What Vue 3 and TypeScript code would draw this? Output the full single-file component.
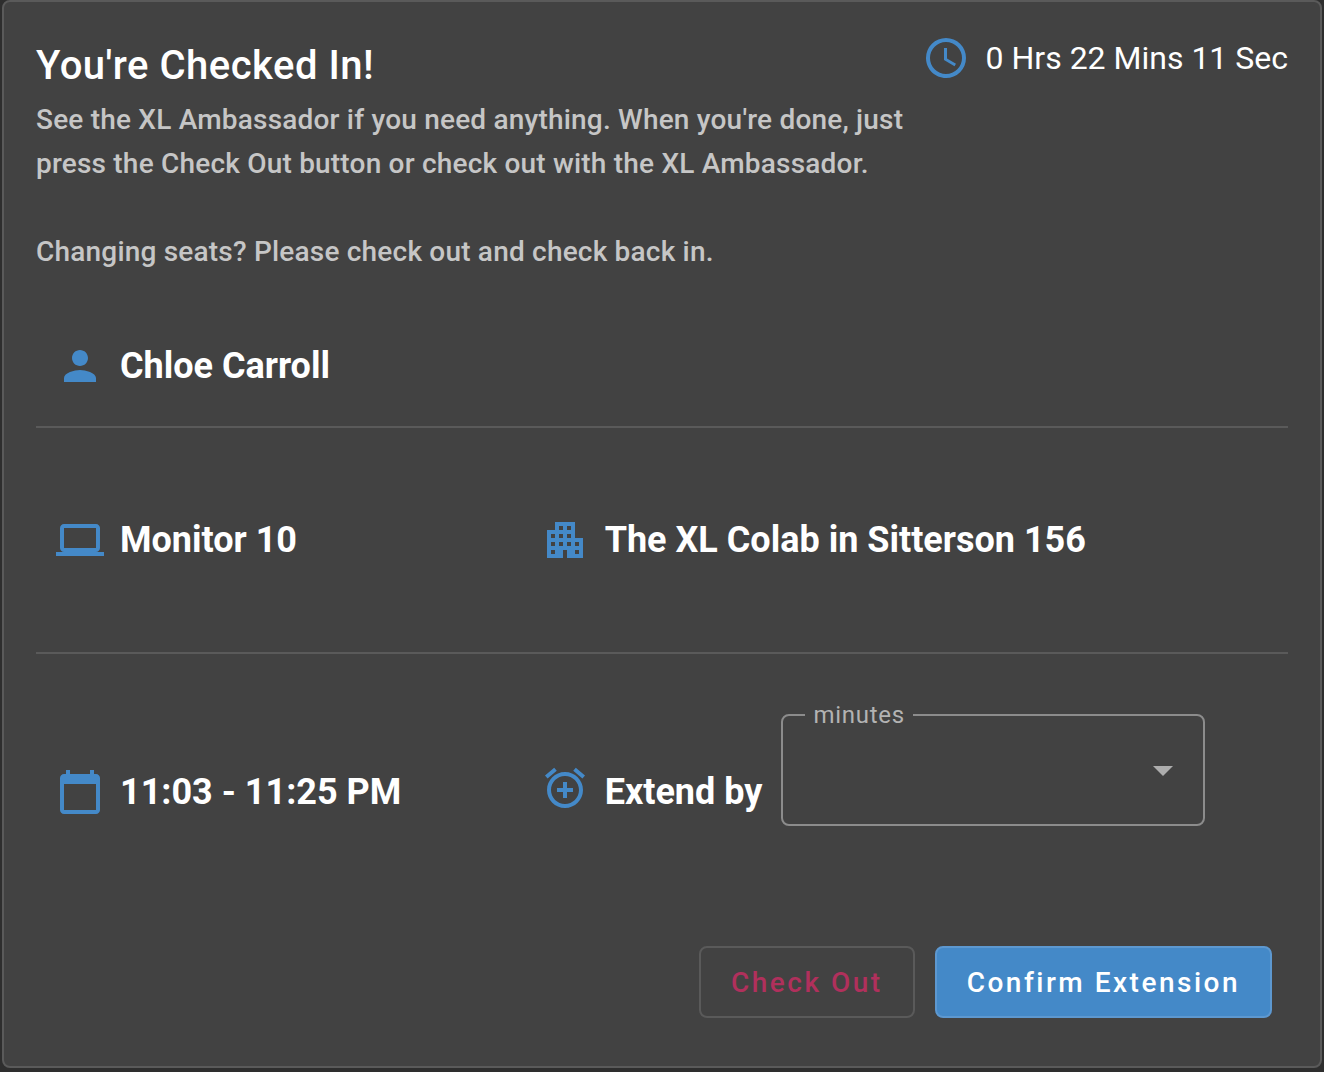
<script setup lang="ts">
import { computed, onMounted, ref } from 'vue'

const icons = {
  clock:
    'M12,20A8,8 0 0,0 20,12A8,8 0 0,0 12,4A8,8 0 0,0 4,12A8,8 0 0,0 12,20M12,2A10,10 0 0,1 22,12A10,10 0 0,1 12,22C6.47,22 2,17.5 2,12A10,10 0 0,1 12,2M12.5,7V12.25L17,14.92L16.25,16.15L11,13V7H12.5Z',
  person:
    'M12 12c2.21 0 4-1.79 4-4s-1.79-4-4-4-4 1.79-4 4 1.79 4 4 4zm0 2c-2.67 0-8 1.34-8 4v2h16v-2c0-2.66-5.33-4-8-4z',
  laptop:
    'M20 18c1.1 0 1.99-.9 1.99-2L22 6c0-1.1-.9-2-2-2H4c-1.1 0-2 .9-2 2v10c0 1.1.9 2 2 2H0v2h24v-2h-4zM4 6h16v10H4V6z',
  building:
    'M17 11V3H7v4H3v14h8v-4h2v4h8V11h-4zM7 19H5v-2h2v2zm0-4H5v-2h2v2zm0-4H5V9h2v2zm4 4H9v-2h2v2zm0-4H9V9h2v2zm0-4H9V5h2v2zm4 8h-2v-2h2v2zm0-4h-2V9h2v2zm0-4h-2V5h2v2zm4 12h-2v-2h2v2zm0-4h-2v-2h2v2z',
  calendar:
    'M20 3h-1V1h-2v2H7V1H5v2H4c-1.1 0-2 .9-2 2v16c0 1.1.9 2 2 2h16c1.1 0 2-.9 2-2V5c0-1.1-.9-2-2-2zm0 18H4V8h16v13z',
  alarmAdd:
    'M7.88 3.39L6.6 1.86 2 5.71l1.29 1.53 4.59-3.85zM22 5.72l-4.6-3.86-1.29 1.53 4.6 3.86L22 5.72zM12 4c-4.97 0-9 4.03-9 9s4.02 9 9 9c4.97 0 9-4.03 9-9s-4.03-9-9-9zm0 16c-3.87 0-7-3.13-7-7s3.13-7 7-7 7 3.13 7 7-3.13 7-7 7zm1-11h-2v3H8v2h3v3h2v-3h3v-2h-3V9z',
}

const elapsedSeconds = 22 * 60 + 11
const elapsed = computed<string>(() => {
  const hours = Math.floor(elapsedSeconds / 3600)
  const minutes = Math.floor((elapsedSeconds % 3600) / 60)
  return `${hours} Hrs ${minutes} Mins ${elapsedSeconds % 60} Sec`
})

const minuteOptions: number[] = [15, 30, 45, 60]
const extension = ref<number | null>(null)
const minutesSelect = ref<HTMLSelectElement | null>(null)

// The field starts empty, with no option chosen.
onMounted(() => {
  if (minutesSelect.value) minutesSelect.value.selectedIndex = -1
})
</script>

<template>
  <main class="card">
    <header class="header">
      <div class="intro">
        <h1 class="title">You're Checked In!</h1>
        <p class="text">
          See the XL Ambassador if you need anything. When you're done, just press the Check Out
          button or check out with the XL Ambassador.
        </p>
        <p class="text">Changing seats? Please check out and check back in.</p>
      </div>
      <div class="timer">
        <svg class="icon" viewBox="0 0 24 24" aria-hidden="true"><path :d="icons.clock" /></svg>
        <span>{{ elapsed }}</span>
      </div>
    </header>

    <section class="row row-person">
      <div class="item">
        <svg class="icon" viewBox="0 0 24 24" aria-hidden="true"><path :d="icons.person" /></svg>
        <span>Chloe Carroll</span>
      </div>
    </section>

    <section class="row row-place">
      <div class="item">
        <svg class="icon" viewBox="0 0 24 24" aria-hidden="true"><path :d="icons.laptop" /></svg>
        <span>Monitor 10</span>
      </div>
      <div class="item">
        <svg class="icon" viewBox="0 0 24 24" aria-hidden="true"><path :d="icons.building" /></svg>
        <span>The XL Colab in Sitterson 156</span>
      </div>
    </section>

    <section class="row row-time">
      <div class="item">
        <div class="caption">
          <svg class="icon" viewBox="0 0 24 24" aria-hidden="true">
            <path :d="icons.calendar" />
          </svg>
          <span>11:03 - 11:25 PM</span>
        </div>
      </div>
      <div class="item">
        <div class="caption">
          <svg class="icon icon-raised" viewBox="0 0 24 24" aria-hidden="true">
            <path :d="icons.alarmAdd" />
          </svg>
          <span>Extend by</span>
        </div>
        <fieldset class="field">
          <legend class="legend"><label for="minutes">minutes</label></legend>
          <select id="minutes" ref="minutesSelect" v-model="extension" class="select">
            <option v-for="m in minuteOptions" :key="m" :value="m">{{ m }}</option>
          </select>
          <svg class="arrow" viewBox="0 0 20 10" aria-hidden="true"><path d="M0 0h20L10 10z" /></svg>
        </fieldset>
      </div>
    </section>

    <footer class="actions">
      <button type="button" class="button button-out">Check Out</button>
      <button type="button" class="button button-confirm">Confirm Extension</button>
    </footer>
  </main>
</template>

<style>
body {
  background: #2e2e2e;
}
</style>

<style scoped>
.card {
  box-sizing: border-box;
  margin: 0 2px 4px;
  padding: 32px 32px 48px;
  border: 2px solid #5a5a5a;
  border-radius: 8px;
  background: #424242;
  color: #fff;
  font-family: Roboto, 'Liberation Sans', sans-serif;
}

.header {
  display: flex;
  justify-content: space-between;
  align-items: flex-start;
}

.intro {
  flex: 1;
}

.title {
  margin: 0;
  font-size: 40px;
  font-weight: 500;
  line-height: 64px;
  letter-spacing: 0.0125em;
}

.text {
  margin: 0 0 44px;
  color: #c6c6c6;
  font-size: 28px;
  font-weight: 500;
  line-height: 44px;
  letter-spacing: 0.0071em;
}

.timer {
  display: flex;
  align-items: center;
  gap: 16px;
  font-size: 32px;
  line-height: 48px;
  white-space: nowrap;
}

.icon {
  flex: none;
  width: 48px;
  height: 48px;
  fill: #4489c8;
}

.icon-raised {
  margin: -8px 0 0;
}

.row {
  display: grid;
  grid-template-columns: 12fr 19fr;
  align-items: end;
}

.row-person {
  padding: 24px 0 36px;
  border-bottom: 2px solid #5a5a5a;
}

.row-place {
  padding: 88px 0;
  border-bottom: 2px solid #5a5a5a;
}

.row-time {
  padding: 48px 0 120px;
}

.item {
  display: flex;
  align-items: flex-end;
  gap: 16px;
  padding-left: 20px;
  font-size: 36px;
  font-weight: 700;
  line-height: 48px;
  white-space: nowrap;
}

.caption {
  display: flex;
  align-items: center;
  gap: 16px;
  height: 48px;
  margin-bottom: 10px;
}

.field {
  position: relative;
  box-sizing: border-box;
  width: 424px;
  min-width: 0;
  margin: 0 0 0 3px;
  padding: 0 22px;
  border: 2px solid #8c8c8c;
  border-radius: 8px;
}

.legend {
  padding: 0 8px;
  color: #b3b3b3;
  font-size: 24px;
  font-weight: 400;
  line-height: 26px;
  letter-spacing: 0.03em;
}

.select {
  display: block;
  width: 100%;
  height: 96px;
  padding: 0 48px 0 8px;
  border: 0;
  outline: 0;
  appearance: none;
  background: transparent;
  color: #fff;
  font: inherit;
  font-size: 32px;
}

.select option {
  background: #424242;
}

.arrow {
  position: absolute;
  right: 30px;
  bottom: 48px;
  width: 20px;
  height: 10px;
  fill: #adadad;
  pointer-events: none;
}

.actions {
  display: flex;
  justify-content: flex-end;
  gap: 20px;
  padding-right: 16px;
}

.button {
  box-sizing: border-box;
  height: 72px;
  padding: 0 30px;
  border: 2px solid #5a5a5a;
  border-radius: 8px;
  font-family: inherit;
  font-size: 28px;
  font-weight: 500;
  letter-spacing: 0.0893em;
}

.button-out {
  background: transparent;
  color: #b0305c;
}

.button-confirm {
  border-color: #5d98d0;
  background: #4489c8;
  color: #fff;
}
</style>
